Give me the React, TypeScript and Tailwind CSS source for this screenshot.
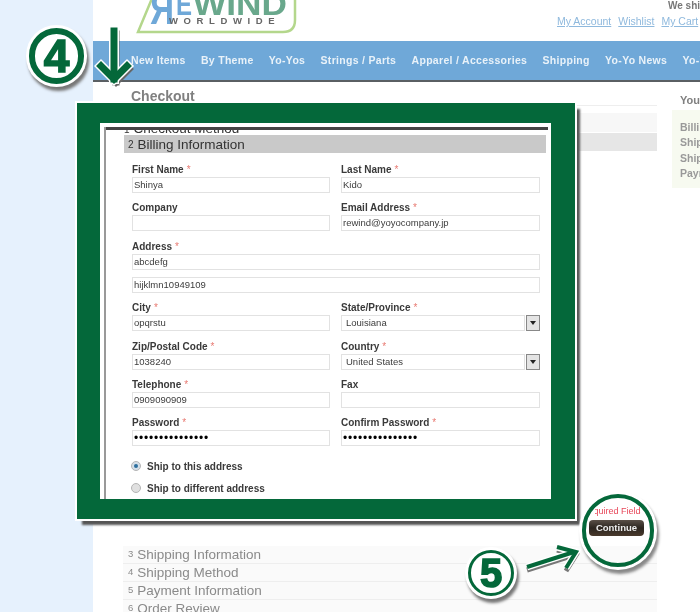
const navItems = ["New Items", "By Theme", "Yo-Yos", "Strings / Parts", "Apparel / Accessories", "Shipping", "Yo-Yo News", "Yo-Yo Info"];
const steps = [
  { n: 3, label: "Shipping Information" },
  { n: 4, label: "Shipping Method" },
  { n: 5, label: "Payment Information" },
  { n: 6, label: "Order Review" },
];
const progress = ["Billing Address", "Shipping Address", "Shipping Method", "Payment Method"];

function Label({ text, required }: { text: string; required?: boolean }) {
  return (
    <div className="h-[16px] text-[10px] leading-[17px] font-bold text-[#3a3a3a]">
      {text}
      {required && <span className="ml-[3px] font-normal text-[#e87a72]">*</span>}
    </div>
  );
}

function Box({ value, password }: { value?: string; password?: boolean }) {
  return (
    <div
      className={
        "h-[16px] border border-[#e2e2e2] bg-white pl-[1px] whitespace-nowrap text-[#3c3c3c] " +
        (password
          ? "text-[12px] leading-[14px] tracking-[0.8px] text-black"
          : "text-[9.5px] leading-[14px]")
      }
    >
      {value}
    </div>
  );
}

function Select({ value }: { value: string }) {
  return (
    <div className="flex h-[16px]">
      <div className="flex-1 border border-[#e2e2e2] bg-white pl-[4px] text-[9.5px] leading-[14px] text-[#3c3c3c]">
        {value}
      </div>
      <div className="ml-[1px] flex w-[14px] items-center justify-center border border-[#888] bg-[#e4e4e4]">
        <svg width="6" height="4" viewBox="0 0 6 4">
          <path d="M0 0h6L3 4z" fill="#222" />
        </svg>
      </div>
    </div>
  );
}

function Field({ label, required, value, password }: { label: string; required?: boolean; value?: string; password?: boolean }) {
  return (
    <div>
      <Label text={label} required={required} />
      <Box value={value} password={password} />
    </div>
  );
}

function Logo() {
  return (
    <svg width="168" height="34" viewBox="0 0 168 34" className="ml-[40px] shrink-0">
      <path d="M20 -4L5 32H150Q162 32 162 20V-4" fill="white" stroke="#b4d78c" strokeWidth="2.5" />
      <text transform="translate(58 0) scale(-1 1)" x="17" y="24" fontFamily="Liberation Sans, sans-serif" fontWeight="700" fontSize="44" textLength="24" lengthAdjust="spacingAndGlyphs" fill="#6fa8d8">
        R
      </text>
      <text x="43" y="15" fontFamily="Liberation Sans, sans-serif" fontWeight="700" fontSize="32" textLength="16" lengthAdjust="spacingAndGlyphs" fill="#6fa8d8">
        E
      </text>
      <text x="60" y="15" fontFamily="Liberation Sans, sans-serif" fontWeight="700" fontSize="32" textLength="94" lengthAdjust="spacingAndGlyphs" fill="#69a88c">
        WIND
      </text>
      <text x="36" y="24" fontFamily="Liberation Sans, sans-serif" fontWeight="700" fontSize="9.5" letterSpacing="5.6" fill="#666">
        WORLDWIDE
      </text>
    </svg>
  );
}

function BackgroundPage() {
  return (
    <div className="w-[607px] shrink-0 bg-white">
      <header className="flex h-[41px] items-start justify-between overflow-hidden">
        <Logo />
        <div className="flex w-[143px] shrink-0 flex-col items-end overflow-hidden">
          <div className="h-[14px] w-[32px] self-end overflow-hidden whitespace-nowrap text-[10px] leading-[11px] font-bold text-[#777]">
            We ship worldwide
          </div>
          <div className="flex w-[143px] gap-[7px] whitespace-nowrap text-[10.5px] leading-[14px] text-[#8fb9dd] underline">
            <span>My Account</span>
            <span>Wishlist</span>
            <span>My Cart</span>
          </div>
        </div>
      </header>

      <nav className="flex h-[41px] items-center gap-[15.3px] overflow-hidden whitespace-nowrap border-b-2 border-[#5a5f63] bg-[#6fa8d8] pl-[38px] pt-[1px] text-[10.5px] font-bold tracking-[0.3px] text-[#e9f2f9]">
        {navItems.map((item) => (
          <span key={item}>{item}</span>
        ))}
      </nav>

      <div className="flex">
        <div className="ml-[30px] w-[534px] shrink-0">
          <div className="h-[24px] border-b border-[#eeeeee] pl-[8px] pt-[7px] text-[14px] leading-[15px] font-bold text-[#808080]">
            Checkout
          </div>
          <div className="mt-[7px] h-[19px] bg-[#f7f7f7]" />
          <div className="mt-[1px] h-[18px] bg-[#e6e6e6]" />
          <div className="mt-[354px] flex h-[12px] justify-end pr-[16px]">
            <div className="flex w-[46px] justify-end overflow-hidden whitespace-nowrap text-[9px] leading-[12px] text-[#e8485a]">
              <span className="mr-[-4px] shrink-0">* Required Fields</span>
            </div>
          </div>
          <div className="mt-[3px] flex justify-end pr-[13px]">
            <button className="h-[16px] w-[55px] rounded-[4px] bg-gradient-to-b from-[#5a5048] via-[#2c2620] to-[#4a3a2c] text-[9.5px] leading-[16px] font-bold text-[#eeeeee]">
              Continue
            </button>
          </div>
          <div className="mt-[10px]">
            {steps.map((step) => (
              <div key={step.n} className="flex h-[18px] items-center gap-[4px] border-b border-[#eeeeee] bg-[#fafafa] pl-[5px] text-[#8a8a8a]">
                <span className="text-[9.5px]">{step.n}</span>
                <span className="text-[13.5px] leading-[17px]">{step.label}</span>
              </div>
            ))}
          </div>
        </div>
        <div className="ml-[15px] min-w-0 flex-1 overflow-hidden whitespace-nowrap">
          <div className="pl-[8px] pt-[11px] text-[11px] leading-[14px] font-bold text-[#808080]">Your Checkout</div>
          <div className="mt-[3px] h-[78px] bg-[#f7faf0] pl-[8px] pt-[10px] text-[10.5px] leading-[15.4px] font-bold text-[#999]">
            {progress.map((item) => (
              <div key={item}>{item}</div>
            ))}
          </div>
        </div>
      </div>
    </div>
  );
}

function BillingPanel() {
  return (
    <div className="absolute left-[77px] top-[103px] h-[416px] w-[498px] border-b-[20px] border-l-[23px] border-r-[24px] border-t-[20px] border-[#04683a] bg-white shadow-[0_0_0_2px_#ffffff,5px_6px_2px_#555]">
      <div className="h-full overflow-hidden pt-[4px]">
        <div className="ml-[4px] h-[372px] border-l-2 border-[#999]">
          <div className="relative mr-[3px] h-[8px] overflow-hidden border-t-[3px] border-[#444]">
            <div className="absolute -top-[10px] left-[18px] whitespace-nowrap text-[13.5px] leading-[17px] text-[#333]">
              <span className="mr-[4px] text-[10px]">1</span>Checkout Method
            </div>
          </div>
          <div className="ml-[18px] flex h-[18px] w-[422px] items-center gap-[4px] bg-[#c9c9c9] pl-[4px] text-[#333]">
            <span className="text-[10px]">2</span>
            <span className="text-[13.5px] leading-[17px]">Billing Information</span>
          </div>
          <div className="pl-[26px] pt-[8px]">
            <div className="grid w-[408px] grid-cols-[198px_199px] gap-x-[11px] gap-y-[6.4px]">
              <Field label="First Name" required value="Shinya" />
              <Field label="Last Name" required value="Kido" />
              <Field label="Company" />
              <Field label="Email Address" required value="rewind@yoyocompany.jp" />
              <div className="col-span-2 flex flex-col">
                <Label text="Address" required />
                <Box value="abcdefg" />
                <div className="mt-[7px]">
                  <Box value="hijklmn10949109" />
                </div>
              </div>
              <Field label="City" required value="opqrstu" />
              <div>
                <Label text="State/Province" required />
                <Select value="Louisiana" />
              </div>
              <Field label="Zip/Postal Code" required value="1038240" />
              <div>
                <Label text="Country" required />
                <Select value="United States" />
              </div>
              <Field label="Telephone" required value="0909090909" />
              <Field label="Fax" />
              <Field label="Password" required value="•••••••••••••••" password />
              <Field label="Confirm Password" required value="•••••••••••••••" password />
            </div>
            <div className="mt-[12px] flex h-[16px] items-center gap-[6px] text-[10px] font-bold text-[#3a3a3a]">
              <span className="-ml-[1px] flex h-[10px] w-[10px] items-center justify-center rounded-full border border-[#b5b5b5] bg-[#d5dfe8]">
                <span className="h-[4px] w-[4px] rounded-full bg-[#2d6f9e]" />
              </span>
              Ship to this address
            </div>
            <div className="mt-[6px] flex h-[16px] items-center gap-[6px] text-[10px] font-bold text-[#3a3a3a]">
              <span className="-ml-[1px] h-[10px] w-[10px] rounded-full border border-[#b5b5b5] bg-[#e0e0e0]" />
              Ship to different address
            </div>
          </div>
        </div>
      </div>
    </div>
  );
}

function StepBadge({ digit, className, digitClass }: { digit: string; className: string; digitClass: string }) {
  return (
    <div className={"absolute flex items-center justify-center rounded-full border-[#04683a] bg-white font-bold text-[#04683a] shadow-[0_0_0_3px_#ffffff,2px_4px_3px_3px_#777] " + className}>
      <span className={digitClass}>{digit}</span>
    </div>
  );
}

export default function App() {
  return (
    <div
      className="relative flex h-[612px] w-[700px] overflow-hidden bg-[#e6f1fd] pl-[93px] blur-[0.35px]"
      style={{ fontFamily: '"Liberation Sans", Arial, sans-serif' }}
    >
      <BackgroundPage />
      <BillingPanel />

      {/* continue ring */}
      <div className="absolute left-[582px] top-[494px] h-[73px] w-[72px] rounded-full border-[4px] border-[#04683a] shadow-[0_0_0_3px_#ffffff,2px_4px_3px_3px_#888]" />

      <StepBadge digit="4" className="left-[29px] top-[28px] h-[56px] w-[55px] border-[6px]" digitClass="text-[46px] leading-none [-webkit-text-stroke:1.5px_#04683a]" />
      <StepBadge digit="5" className="left-[468px] top-[550px] h-[46px] w-[46px] border-[3px]" digitClass="text-[40px] leading-none [-webkit-text-stroke:1.5px_#04683a]" />

      {/* arrow 4 */}
      <svg className="absolute left-[94px] top-[27px]" width="42" height="64" viewBox="0 0 42 64">
        <g fill="none" strokeLinecap="square">
          <g stroke="#666" transform="translate(2 3)">
            <path d="M20 4V52" strokeWidth="7" />
            <path d="M7 39L20 52L33 39" strokeWidth="7" />
          </g>
          <g stroke="#ffffff">
            <path d="M20 4V52" strokeWidth="10" />
            <path d="M7 39L20 52L33 39" strokeWidth="10" />
          </g>
          <g stroke="#04683a">
            <path d="M20 4V52" strokeWidth="7" />
            <path d="M7 39L20 52L33 39" strokeWidth="7" />
          </g>
        </g>
      </svg>

      {/* arrow 5 */}
      <svg className="absolute left-[522px] top-[540px]" width="62" height="38" viewBox="0 0 62 38">
        <g fill="none">
          <g stroke="#777" transform="translate(0 3)">
            <path d="M5 27L52 12" strokeWidth="5" />
            <path d="M35 7L54 12L44 28" strokeWidth="5" />
          </g>
          <g stroke="#ffffff">
            <path d="M5 27L52 12" strokeWidth="7" />
            <path d="M35 7L54 12L44 28" strokeWidth="7" />
          </g>
          <g stroke="#04683a">
            <path d="M5 27L52 12" strokeWidth="4" />
            <path d="M35 7L54 12L44 28" strokeWidth="4" />
          </g>
        </g>
      </svg>
    </div>
  );
}
